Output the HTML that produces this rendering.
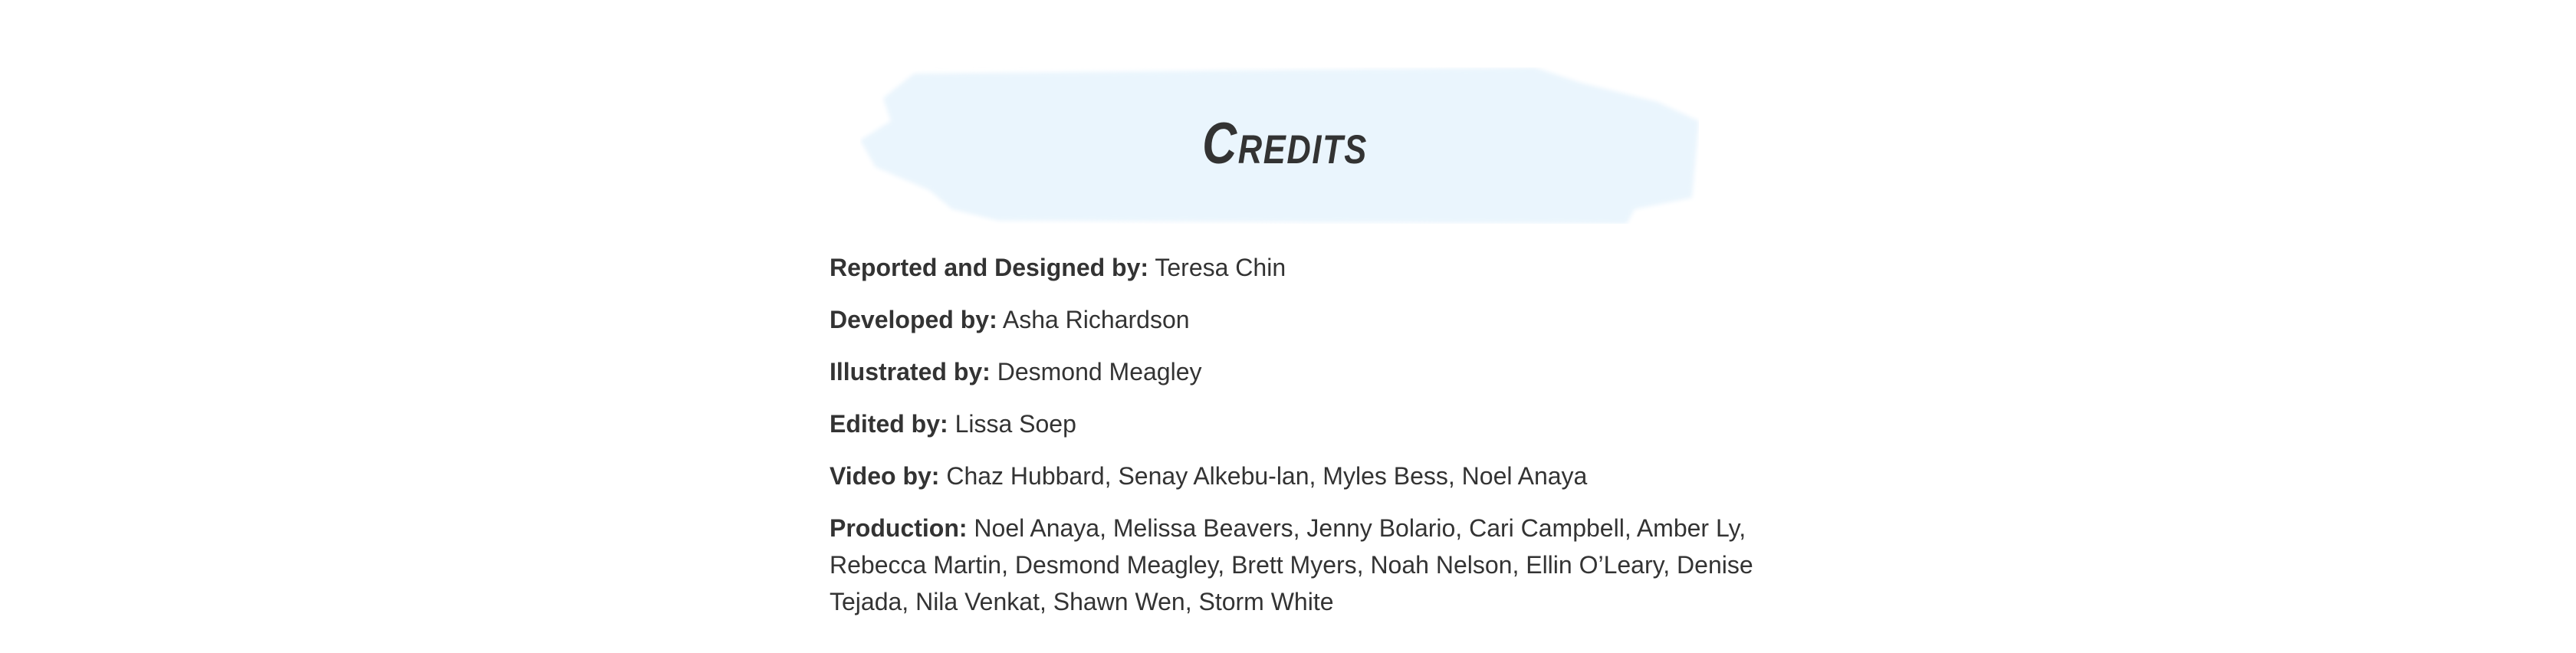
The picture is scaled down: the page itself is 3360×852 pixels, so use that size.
<!DOCTYPE html>
<html><head><meta charset="utf-8"><style>
html,body{margin:0;padding:0;background:#fff;width:3360px;height:852px;overflow:hidden}
.brush{position:absolute;left:1122px;top:88px;width:1094px;height:204px}
h1{position:absolute;left:1376px;width:600px;top:138px;margin:0;text-align:center;font-family:"Liberation Sans",sans-serif;font-weight:bold;font-style:italic;font-variant:small-caps;font-size:76px;line-height:100px;color:#333;letter-spacing:2px;transform:scaleX(0.82)}
.c{position:absolute;left:1082px;top:325px;width:1400px;font-family:"Liberation Sans",sans-serif;font-size:32px;line-height:48px;color:#333;white-space:nowrap}
.c p{margin:0 0 20px 0}
b{font-weight:bold}
</style></head><body>
<svg class="brush" viewBox="0 0 1094 204" preserveAspectRatio="none">
<defs><filter id="f"><feGaussianBlur stdDeviation="3"/></filter></defs>
<path d="M70 8 L880 0 L940 20 L1040 45 L1094 70 L1085 170 L1010 185 L1000 204 L180 200 L120 185 L90 160 L20 130 L0 95 L40 70 L30 40 Z" fill="#eaf5fd" filter="url(#f)"/>
</svg>
<h1>Credits</h1>
<div class="c">
<p><b>Reported and Designed by:</b> Teresa Chin</p>
<p><b>Developed by:</b> Asha Richardson</p>
<p><b>Illustrated by:</b> Desmond Meagley</p>
<p><b>Edited by:</b> Lissa Soep</p>
<p><b>Video by:</b> Chaz Hubbard, Senay Alkebu-lan, Myles Bess, Noel Anaya</p>
<p><b>Production:</b> Noel Anaya, Melissa Beavers, Jenny Bolario, Cari Campbell, Amber Ly,<br>Rebecca Martin, Desmond Meagley, Brett Myers, Noah Nelson, Ellin O’Leary, Denise<br>Tejada, Nila Venkat, Shawn Wen, Storm White</p>
</div>
</body></html>
